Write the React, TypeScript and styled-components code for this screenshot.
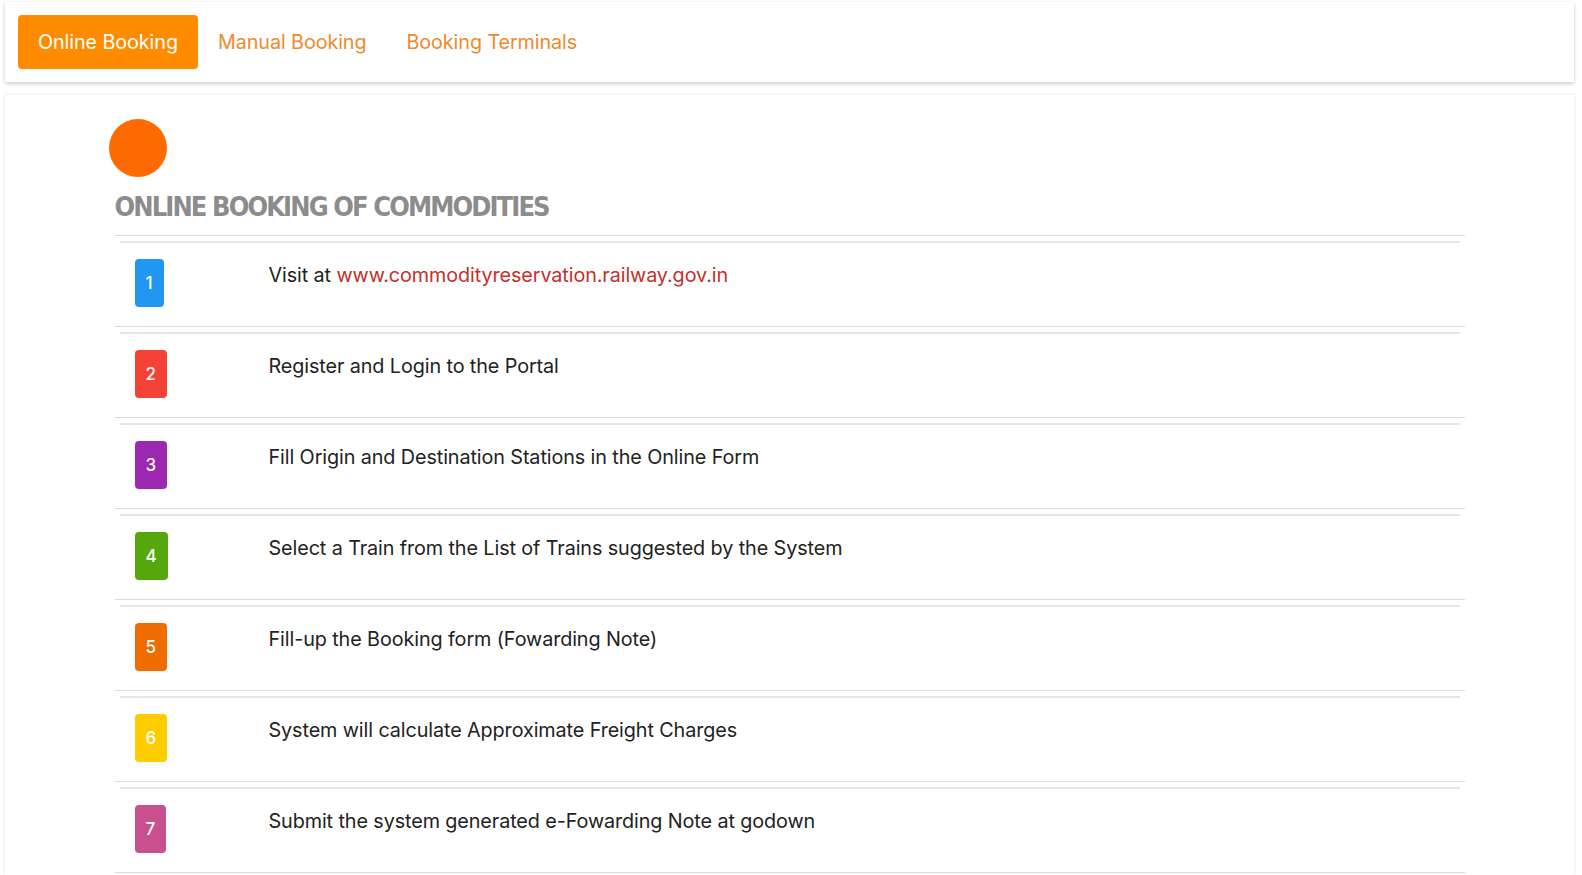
import React from "react";
import styled, { createGlobalStyle } from "styled-components";

const Global = createGlobalStyle`
  html, body { margin: 0; padding: 0; background: #fff; }
  body { font-family: "Inter", "Open Sans", sans-serif; color: #222; }
  * { box-sizing: border-box; }
`;

const Page = styled.div`
  padding: 2px 8px 0 5px;
  display: flex;
  flex-direction: column;
  gap: 13px;
`;

const NavCard = styled.nav`
  height: 80px;
  background: #fff;
  box-shadow: 0 2px 4px rgba(0, 0, 0, 0.18), 0 0 2px rgba(0, 0, 0, 0.06);
  display: flex;
  align-items: center;
  padding: 0 13px;
`;

const Tab = styled.a<{ $active?: boolean }>`
  height: 54px;
  display: inline-flex;
  align-items: center;
  padding: 0 20px;
  border-radius: 4px;
  font-size: 19.8px;
  font-weight: 400;
  letter-spacing: -0.1px;
  text-decoration: none;
  color: ${(p) => (p.$active ? "#fff" : "#ef8a2c")};
  background: ${(p) => (p.$active ? "#ff8c00" : "transparent")};
`;

const ContentCard = styled.section`
  background: #fff;
  box-shadow: 0 0 3px rgba(0, 0, 0, 0.14);
  padding: 24px 0 0;
  min-height: 780px;
`;

const Container = styled.div`
  width: 1350px;
  margin: 0 auto;
`;

const Dot = styled.div`
  width: 58px;
  height: 58px;
  border-radius: 50%;
  background: #ff6a00;
  margin-left: -6px;
`;

const Heading = styled.h2`
  margin: 13px 0 0;
  padding-bottom: 11px;
  border-bottom: 1px solid #dcdcdc;
  font-family: "Liberation Sans Narrow", "DejaVu Sans Condensed", sans-serif;
  font-weight: 700;
  font-size: 27px;
  letter-spacing: -1.9px;
  color: #8c8c8c;
  line-height: 34px;
`;

const Row = styled.div`
  border-bottom: 1px solid #dcdcdc;
  padding-top: 5px;
`;

const RowBody = styled.div`
  margin: 0 5px;
  border-top: 2px solid #e6e6e6;
  height: 85px;
  display: grid;
  grid-template-columns: 134px 1fr;
  padding: 16px 0 0 15px;
`;

const Badge = styled.span<{ $color: string }>`
  justify-self: start;
  display: inline-flex;
  align-items: center;
  justify-content: center;
  height: 48px;
  padding: 0 11px;
  border-radius: 4px;
  background: ${(p) => p.$color};
  color: #fff;
  font-size: 17px;
  font-weight: 500;
`;

const StepText = styled.div`
  font-size: 19.8px;
  line-height: 28px;
  padding-top: 2px;
  letter-spacing: -0.1px;
  color: #222;
`;

const Link = styled.a`
  color: #c4302b;
  text-decoration: none;
`;

const steps: { color: string; text: React.ReactNode }[] = [
  {
    color: "#2196f3",
    text: (
      <>
        Visit at <Link href="#">www.commodityreservation.railway.gov.in</Link>
      </>
    ),
  },
  { color: "#f44336", text: "Register and Login to the Portal" },
  { color: "#9c27b0", text: "Fill Origin and Destination Stations in the Online Form" },
  { color: "#55a70c", text: "Select a Train from the List of Trains suggested by the System" },
  { color: "#ef6c00", text: "Fill-up the Booking form (Fowarding Note)" },
  { color: "#ffcc00", text: "System will calculate Approximate Freight Charges" },
  { color: "#c8508e", text: "Submit the system generated e-Fowarding Note at godown" },
];

export default function App() {
  return (
    <>
      <Global />
      <Page>
        <NavCard>
          <Tab $active href="#">Online Booking</Tab>
          <Tab href="#">Manual Booking</Tab>
          <Tab href="#">Booking Terminals</Tab>
        </NavCard>
        <ContentCard>
          <Container>
            <Dot />
            <Heading>ONLINE BOOKING OF COMMODITIES</Heading>
            {steps.map((s, i) => (
              <Row key={i}>
                <RowBody>
                  <Badge $color={s.color}>{i + 1}</Badge>
                  <StepText>{s.text}</StepText>
                </RowBody>
              </Row>
            ))}
          </Container>
        </ContentCard>
      </Page>
    </>
  );
}
